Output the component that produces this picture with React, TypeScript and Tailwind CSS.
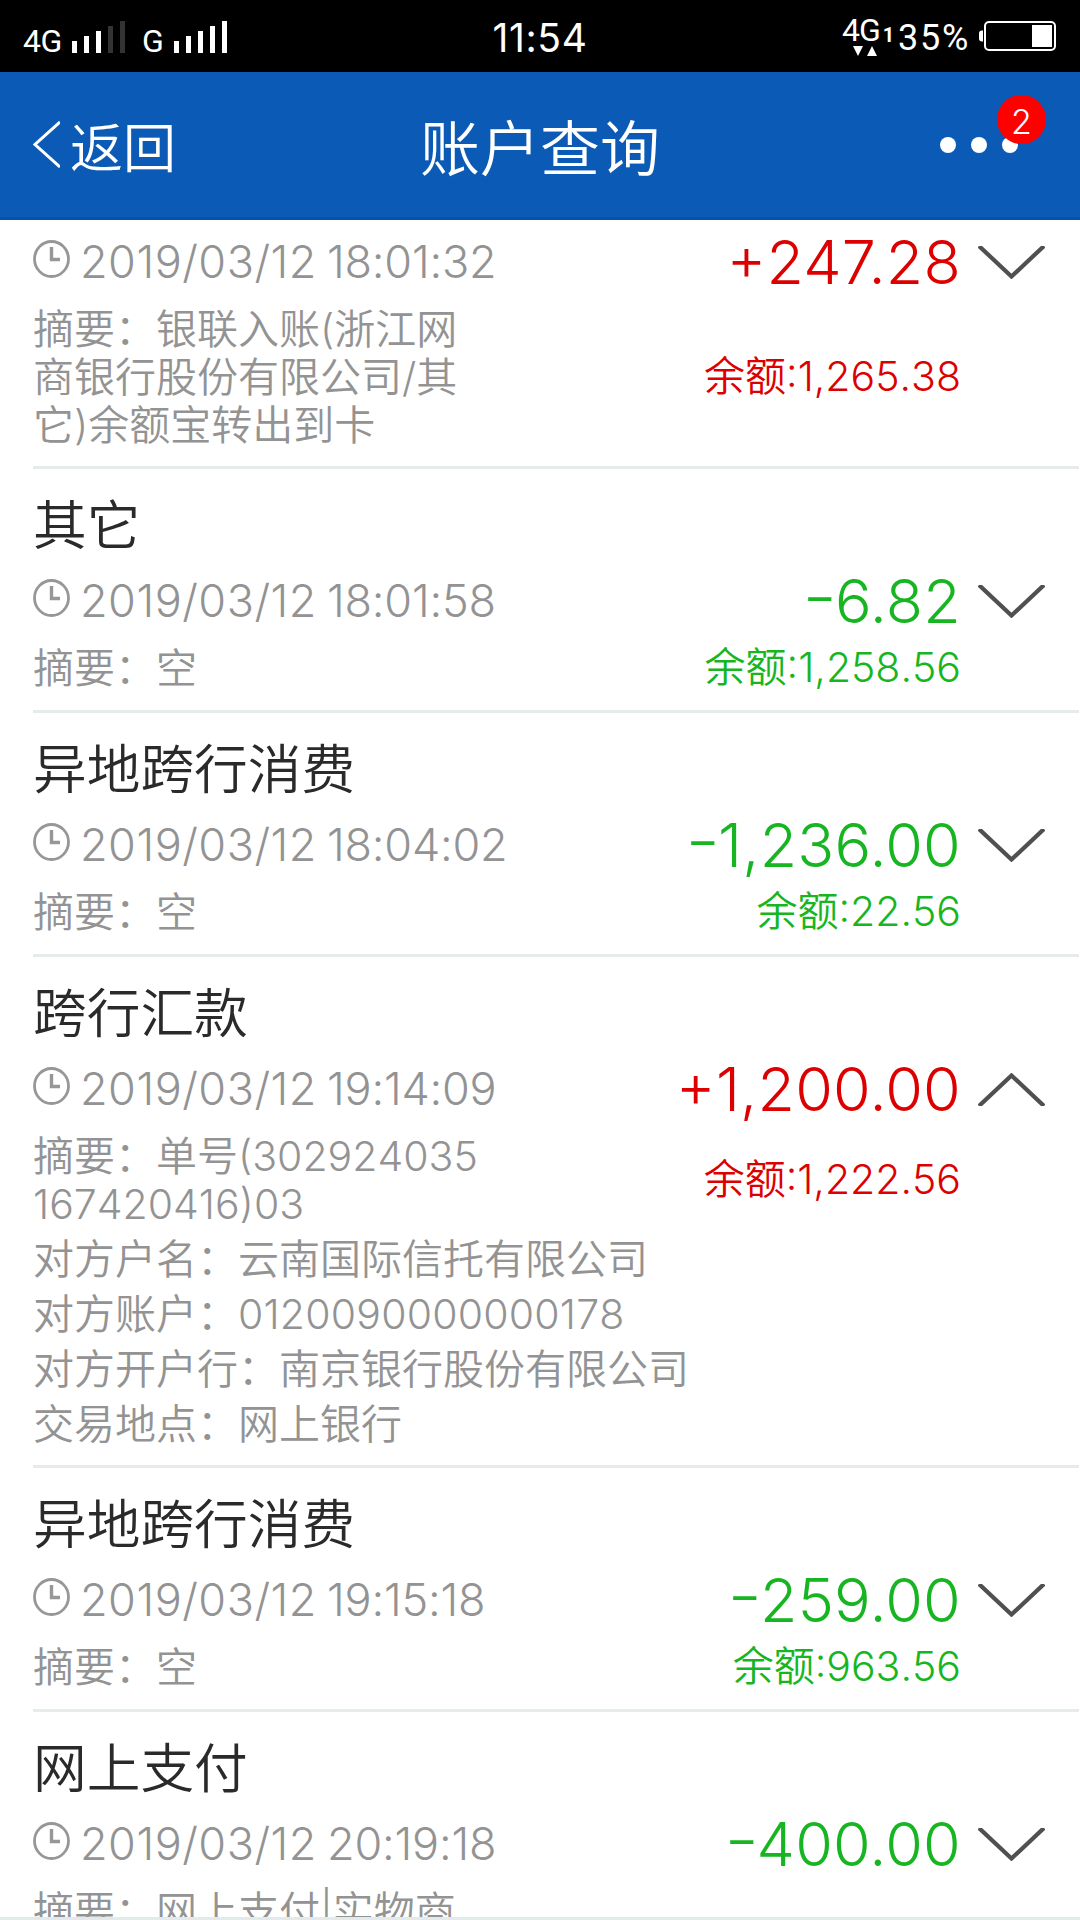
type Detail = { label: string; value: string }

type Transaction = {
  id: number
  title?: string
  date: string
  time: string
  amount: string
  balance?: string
  // the summary is broken by hand, the column is narrower than the row
  summary: string[]
  details?: Detail[]
  bottom: string
}

const transactions: Transaction[] = [
  {
    id: 1,
    date: "2019/03/12",
    time: "18:01:32",
    amount: "+247.28",
    balance: "1,265.38",
    summary: ["银联入账(浙江网", "商银行股份有限公司/其", "它)余额宝转出到卡"],
    bottom: "pb-[18px]",
  },
  {
    id: 2,
    title: "其它",
    date: "2019/03/12",
    time: "18:01:58",
    amount: "-6.82",
    balance: "1,258.56",
    summary: ["空"],
    bottom: "pb-[19px]",
  },
  {
    id: 3,
    title: "异地跨行消费",
    date: "2019/03/12",
    time: "18:04:02",
    amount: "-1,236.00",
    balance: "22.56",
    summary: ["空"],
    bottom: "pb-[19px]",
  },
  {
    id: 4,
    title: "跨行汇款",
    date: "2019/03/12",
    time: "19:14:09",
    amount: "+1,200.00",
    balance: "1,222.56",
    summary: ["单号(302924035", "167420416)03"],
    details: [
      { label: "对方户名", value: "云南国际信托有限公司" },
      { label: "对方账户", value: "0120090000000178" },
      { label: "对方开户行", value: "南京银行股份有限公司" },
      { label: "交易地点", value: "网上银行" },
    ],
    bottom: "pb-[13px]",
  },
  {
    id: 5,
    title: "异地跨行消费",
    date: "2019/03/12",
    time: "19:15:18",
    amount: "-259.00",
    balance: "963.56",
    summary: ["空"],
    bottom: "pb-[19px]",
  },
  {
    id: 6,
    title: "网上支付",
    date: "2019/03/12",
    time: "20:19:18",
    amount: "-400.00",
    summary: ["网上支付|实物商"],
    bottom: "pb-[19px]",
  },
]

function Signal({ heights, active }: { heights: number[]; active: number }) {
  return (
    <div className="flex h-8 items-end gap-[7px]">
      {heights.map((h, i) => (
        <span key={h} className={i < active ? "w-[5px] bg-white" : "w-[5px] bg-[#333333]"} style={{ height: h }} />
      ))}
    </div>
  )
}

function StatusBar() {
  const bars = [12, 17, 22, 27, 32]
  return (
    <div className="grid h-[72px] shrink-0 grid-cols-[1fr_auto_1fr] bg-black text-white">
      <div className="flex items-start pt-[21px] pl-[23px] font-['Roboto',sans-serif]">
        <span className="mt-[3px] w-[49px] text-[32px] leading-[34px] tracking-[-0.5px]">4G</span>
        <Signal heights={bars} active={3} />
        <span className="mt-[3px] ml-[17px] w-[32px] text-[32px] leading-[34px]">G</span>
        <Signal heights={bars} active={5} />
      </div>
      <span className="pt-[17px] text-[39px] leading-[42px] tracking-[0.6px] [font-kerning:none]">11:54</span>
      <div className="flex justify-end pr-6 font-['Roboto',sans-serif]">
        <div className="mt-[17px] flex w-[56px] flex-col">
          <div className="flex items-end whitespace-nowrap">
            <span className="text-[32px] leading-[27px] tracking-[-1px]">4G</span>
            <span className="ml-[3px] text-[20px] leading-[18px] font-bold">1</span>
          </div>
          <svg className="mt-[2px] ml-[11px] h-[10px] w-6" viewBox="0 0 24 10" fill="white">
            <path d="M0 0h10l-5 10zM14 10h10l-5-10z" />
          </svg>
        </div>
        <span className="mt-[17px] w-[81px] text-[36px] leading-[42px] tracking-[1.8px]">35%</span>
        <svg className="mt-[21px] h-[30px] w-[77px]" viewBox="0 0 77 30" fill="none">
          <path d="M4 9.500H3a3 3 0 0 0-3 3v5a3 3 0 0 0 3 3h1z" fill="white" />
          <rect x="6" y="1" width="70" height="28" rx="4" stroke="white" strokeWidth="2" />
          <rect x="53" y="4" width="20" height="22" fill="white" />
        </svg>
      </div>
    </div>
  )
}

function Header() {
  return (
    <header className="grid h-[148px] shrink-0 grid-cols-[1fr_auto_1fr] items-center border-b-[3px] border-[#0753a8] bg-[#0b5bb6] text-white">
      <button className="flex items-center pl-[33px] text-left">
        <svg className="h-[47px] w-[27px]" viewBox="0 0 27 47" fill="none" stroke="white" strokeWidth="3">
          <path d="M27 1L2 23.500L27 46" />
        </svg>
        <span className="ml-[10px] pt-2 text-[53px] leading-[60px] font-[350]">返回</span>
      </button>
      <h1 className="pt-2 text-[60px] leading-[70px] font-[350]">账户查询</h1>
      <div className="flex justify-end pr-[62px]">
        <div className="relative flex gap-[15px]">
          <i className="size-4 rounded-full bg-white" />
          <i className="size-4 rounded-full bg-white" />
          <i className="size-4 rounded-full bg-white" />
          <span className="absolute -top-[42px] left-[57px] flex size-[49px] items-center justify-center rounded-full bg-[#ff0000] pt-1.5 text-[34px] leading-none font-light">
            2
          </span>
        </div>
      </div>
    </header>
  )
}

function ClockIcon() {
  return (
    <svg className="mb-[7px] h-[38px] w-[37px] shrink-0" viewBox="0 0 37 38" fill="none" stroke="#979797">
      <ellipse cx="18.500" cy="19" rx="17" ry="17.500" strokeWidth="2.800" />
      <path d="M18.500 7v12.500H27" strokeWidth="3.400" />
    </svg>
  )
}

function Chevron({ open }: { open: boolean }) {
  return (
    <svg className="h-[33px] w-[67px]" viewBox="0 0 67 33" fill="none" stroke="#505050" strokeWidth="4.200">
      <path d={open ? "M1 33L33.500 2.500L66 33" : "M1 0L33.500 30.500L66 0"} />
    </svg>
  )
}

function Amount({ value }: { value: string }) {
  const sign = value[0]
  return (
    <span className="text-[61px] leading-[84px] tracking-[0.2px] [font-kerning:normal]">
      {/* signs sit at the middle of the digits, the minus is a bit wider than the hyphen */}
      <span
        className={
          sign === "-"
            ? "mr-[1px] inline-block -translate-y-[5px] scale-x-125"
            : "inline-block -translate-y-[4px]"
        }
      >
        {sign}
      </span>
      {value.slice(1)}
    </span>
  )
}

function TransactionRow({ item }: { item: Transaction }) {
  const color = item.amount.startsWith("+") ? "text-[#dc0000]" : "text-[#18b522]"
  return (
    <li className={`mr-px ml-[33px] border-b-[3px] border-[#e6ebeb] ${item.bottom}`}>
      {item.title && <h2 className="h-[90px] pt-[22px] text-[53.700px] leading-[70px] text-[#2a2a2a]">{item.title}</h2>}
      <div className="flex h-[84px] items-center">
        <ClockIcon />
        <time className="ml-[10px] flex text-[45px] whitespace-nowrap">
          <span className="w-[247px] tracking-[0.5px]">{item.date}</span>
          <span className="tracking-[-0.2px]">{item.time}</span>
        </time>
        <span className={`ml-auto ${color}`}>
          <Amount value={item.amount} />
        </span>
        <span className="mr-[34px] ml-[17px] pt-px">
          <Chevron open={!!item.details} />
        </span>
      </div>
      <div className="flex items-center justify-between pr-[118px] text-[41px] leading-[48px]">
        <p className="relative top-px whitespace-nowrap">
          摘要：
          {item.summary.map((line) => (
            <span key={line}>
              {line}
              <br />
            </span>
          ))}
        </p>
        {item.balance && <span className={color}>余额:{item.balance}</span>}
      </div>
      {item.details && (
        <dl className="pt-[5px] text-[41px] leading-[55px]">
          {item.details.map((d) => (
            <div key={d.label} className="flex">
              <dt>{d.label}：</dt>
              <dd className={/^\d+$/.test(d.value) ? "tracking-[0.2px]" : ""}>{d.value}</dd>
            </div>
          ))}
        </dl>
      )}
    </li>
  )
}

export default function App() {
  return (
    <div className="flex h-[1920px] w-[1080px] flex-col overflow-hidden bg-white font-['Inter','Noto_Sans_CJK_SC',sans-serif]">
      <StatusBar />
      <Header />
      <ul className="h-[1697px] overflow-hidden font-[350] text-[#939393] [font-kerning:none]">
        {transactions.map((item) => (
          <TransactionRow key={item.id} item={item} />
        ))}
      </ul>
      <div className="h-[3px] shrink-0 bg-[#e2eaec]" />
    </div>
  )
}
